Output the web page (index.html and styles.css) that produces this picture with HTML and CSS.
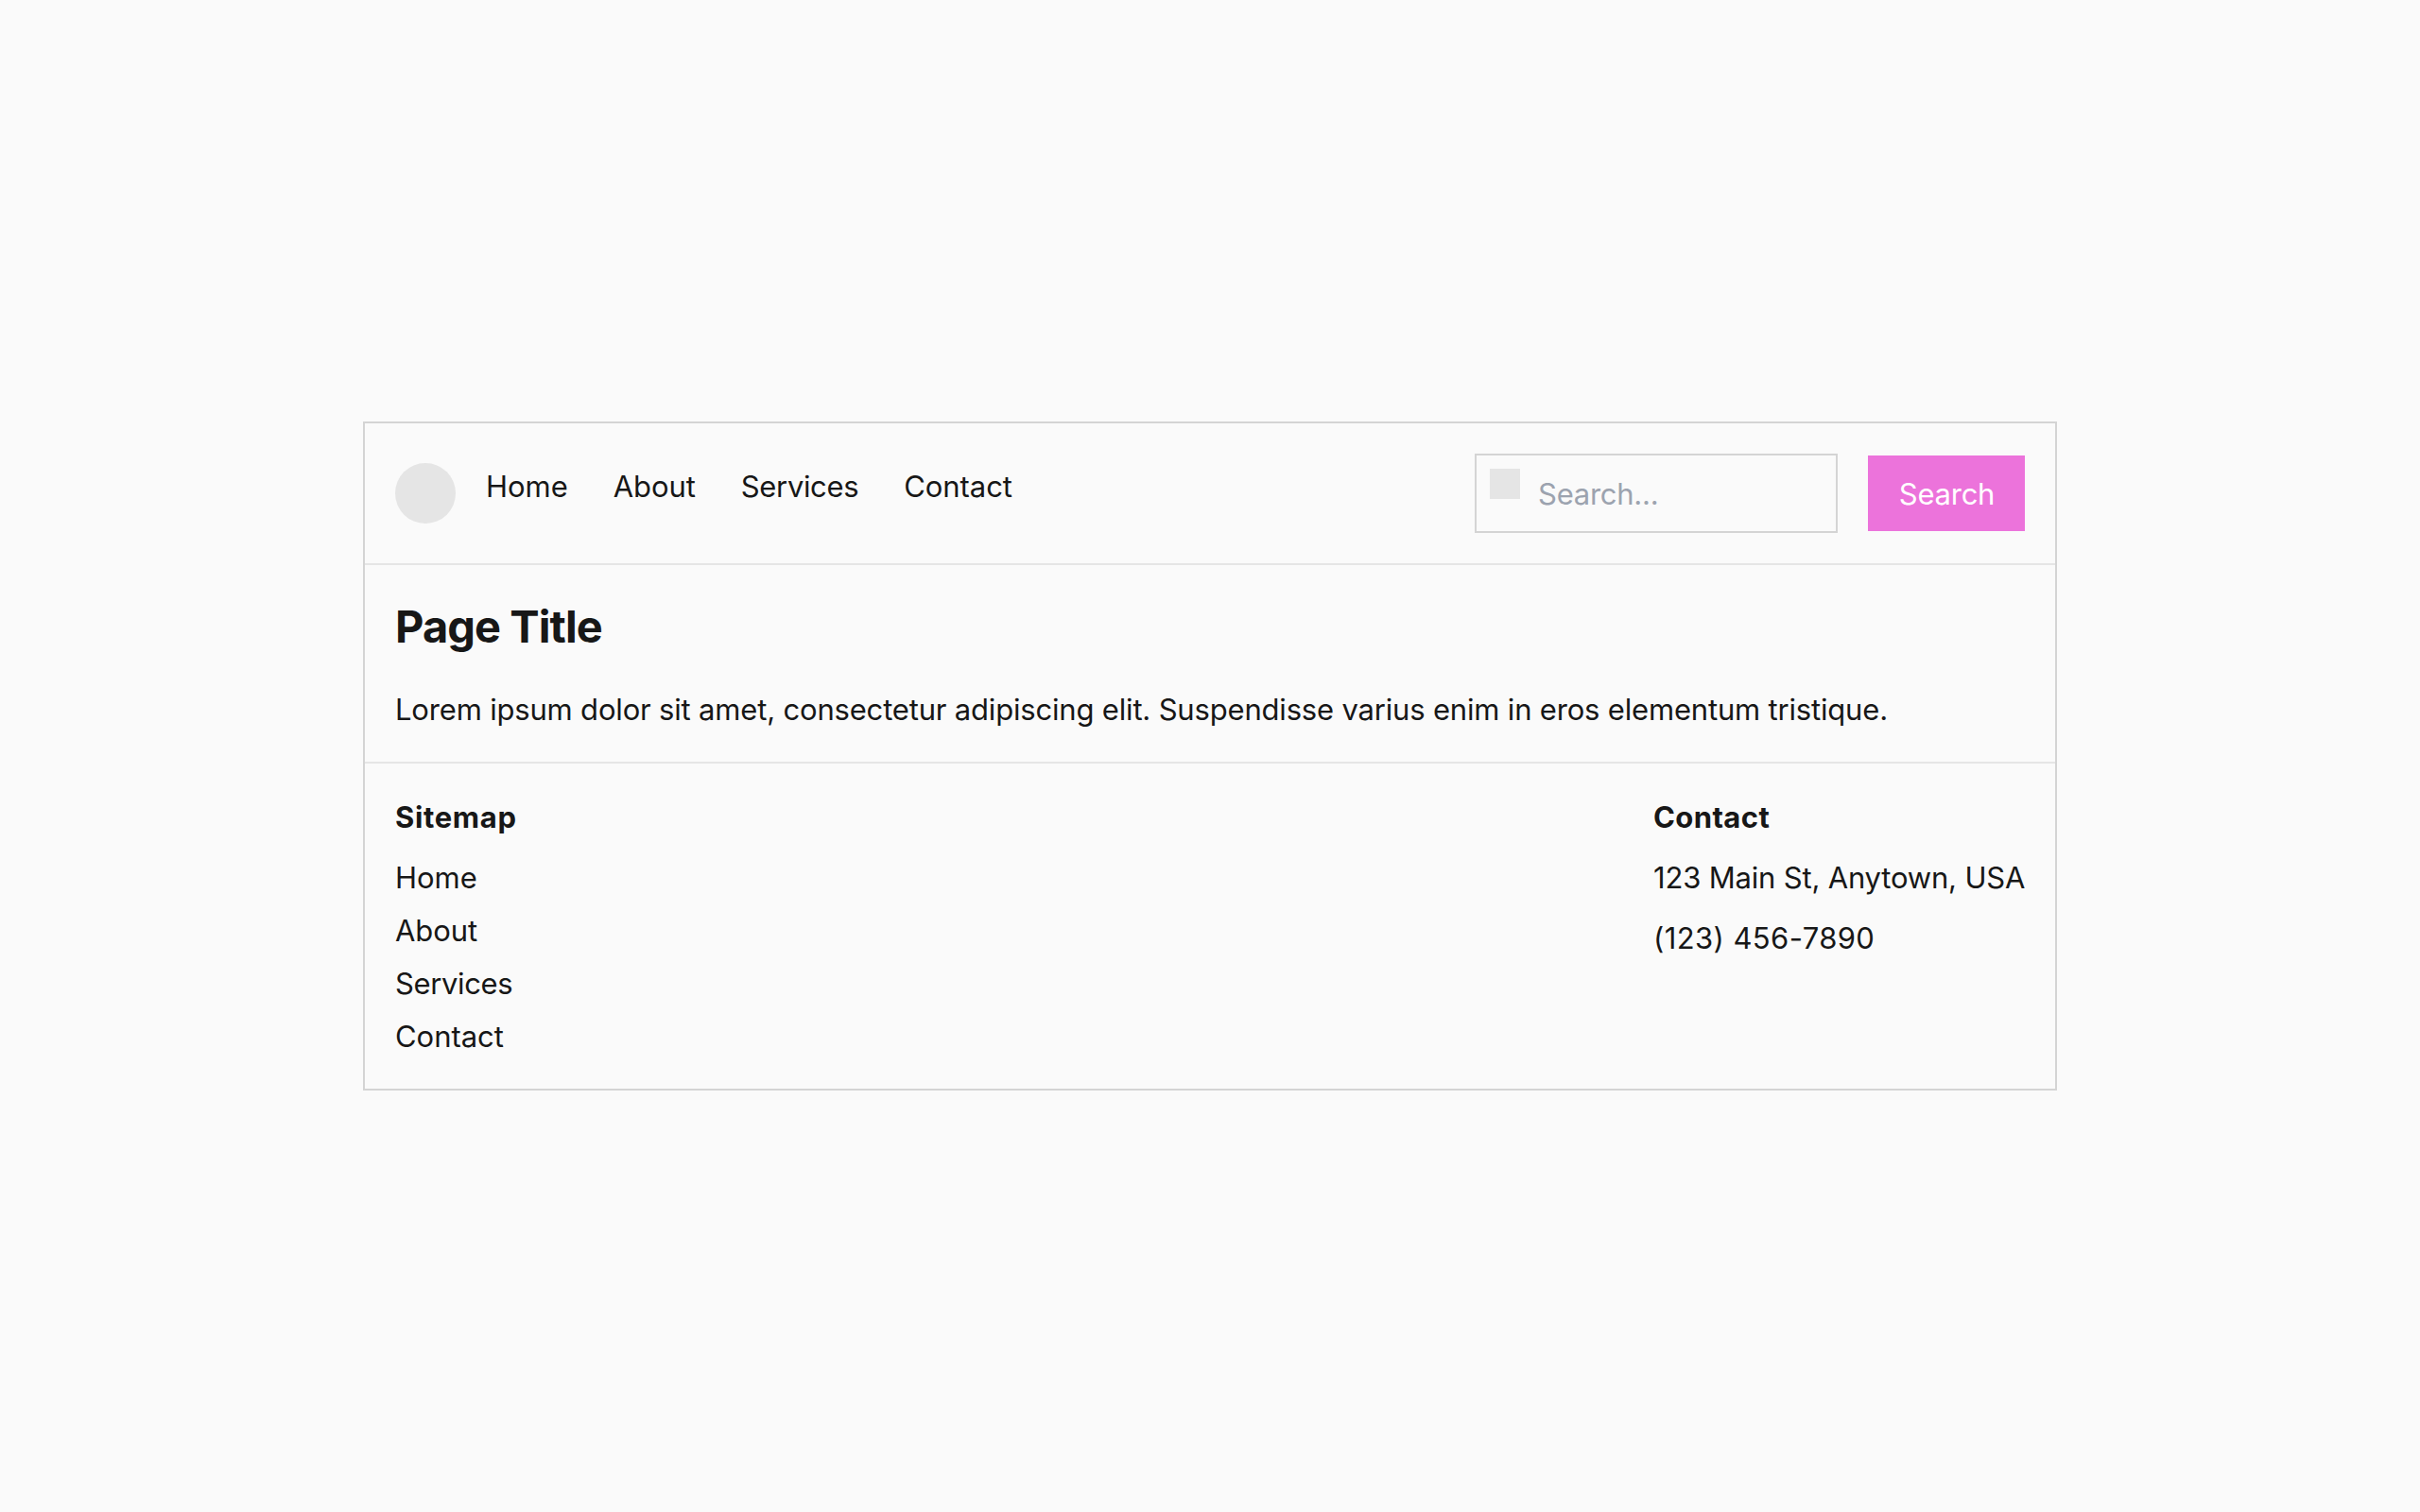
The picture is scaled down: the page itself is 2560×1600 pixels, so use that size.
FILE: index.html
```
<!DOCTYPE html>
<html lang="en">
<head>
    <meta charset="UTF-8">
    <meta name="viewport" content="width=device-width, initial-scale=1.0">
    <title>Page Title</title>
    <link rel="stylesheet" href="styles.css">
</head>
<body>
    <div class="page">
        <header class="header">
            <div class="header-left">
                <div class="logo"></div>
                <nav>
                    <ul class="nav-list">
                        <li class="item">Home</li>
                        <li class="item">About</li>
                        <li class="item services">Services</li>
                        <li class="item">Contact</li>
                    </ul>
                </nav>
            </div>
            <form class="search">
                <div class="search-box">
                    <input class="search-input" type="text" name="search" placeholder="Search...">
                    <span class="search-icon"></span>
                </div>
                <button class="search-button" type="button">Search</button>
            </form>
        </header>
        <main class="main">
            <h1 class="title">Page Title</h1>
            <p class="text">Lorem ipsum dolor sit amet, consectetur adipiscing elit. Suspendisse varius enim in eros elementum tristique.</p>
        </main>
        <footer class="footer">
            <div class="sitemap">
                <h2 class="footer-title">Sitemap</h2>
                <ul class="sitemap-list">
                    <li class="item">Home</li>
                    <li class="item">About</li>
                    <li class="item services">Services</li>
                    <li class="item">Contact</li>
                </ul>
            </div>
            <div class="contact">
                <h2 class="footer-title contact-title">Contact</h2>
                <p class="text address">123 Main St, Anytown, USA</p>
                <p class="text phone">(123) 456-7890</p>
            </div>
        </footer>
    </div>
</body>
</html>
```
FILE: styles.css
```
* {
    box-sizing: border-box;
    margin: 0;
    padding: 0;
}

body {
    display: flex;
    justify-content: center;
    align-items: center;
    min-height: 100vh;
    background-color: #fafafa;
    color: #171717;
    font: 31px/49px Inter, sans-serif;
}

ul {
    list-style: none;
}

.page {
    width: 1792px;
    border: 2px solid #d4d4d4;
}

.header {
    display: flex;
    justify-content: space-between;
    align-items: center;
    height: 150px;
    padding: 0 32px;
    border-bottom: 2px solid #e5e5e5;
}

.header-left {
    display: flex;
    gap: 32px;
}

.logo {
    width: 64px;
    height: 64px;
    border-radius: 50%;
    background-color: #e5e5e5;
}

.nav-list {
    display: flex;
    gap: 48px;
}

.item {
    height: 48px;
    letter-spacing: -0.05px;
}

.services {
    letter-spacing: -0.36px;
}

.search {
    display: flex;
    align-items: center;
    gap: 32px;
}

.search-box {
    position: relative;
    width: 384px;
    height: 84px;
}

.search-input {
    display: block;
    width: 100%;
    height: 84px;
    padding: 16px 16px 15px 65px;
    border: 2px solid #d4d4d4;
    border-radius: 0;
    background: transparent;
    color: #171717;
    font: inherit;
    letter-spacing: -0.25px;
}

.search-input::placeholder {
    color: #9ca3af;
}

.search-icon {
    position: absolute;
    top: 16px;
    left: 16px;
    width: 32px;
    height: 32px;
    background-color: #e5e5e5;
}

.search-button {
    width: 166px;
    height: 80px;
    padding: 16px 0 15px 1px;
    border: none;
    background-color: #ec73db;
    color: #fff;
    font: inherit;
    letter-spacing: -0.25px;
    cursor: pointer;
}

.main {
    padding: 32px;
    border-bottom: 2px solid #e5e5e5;
}

.title {
    height: 64px;
    margin-bottom: 32px;
    font-size: 47px;
    font-weight: 700;
    line-height: 65px;
    letter-spacing: -0.94px;
}

.text {
    height: 48px;
    letter-spacing: -0.18px;
}

.footer {
    display: flex;
    justify-content: space-between;
    padding: 32px;
}

.footer-title {
    height: 48px;
    margin-bottom: 16px;
    font-size: 31px;
    font-weight: 700;
    letter-spacing: 0.65px;
}

.contact-title {
    letter-spacing: 0.4px;
}

.sitemap-list {
    display: flex;
    flex-direction: column;
    gap: 8px;
}

.contact {
    width: 393px;
}

.address {
    margin-bottom: 16px;
    white-space: nowrap;
}

.phone {
    letter-spacing: 0.4px;
}
```
